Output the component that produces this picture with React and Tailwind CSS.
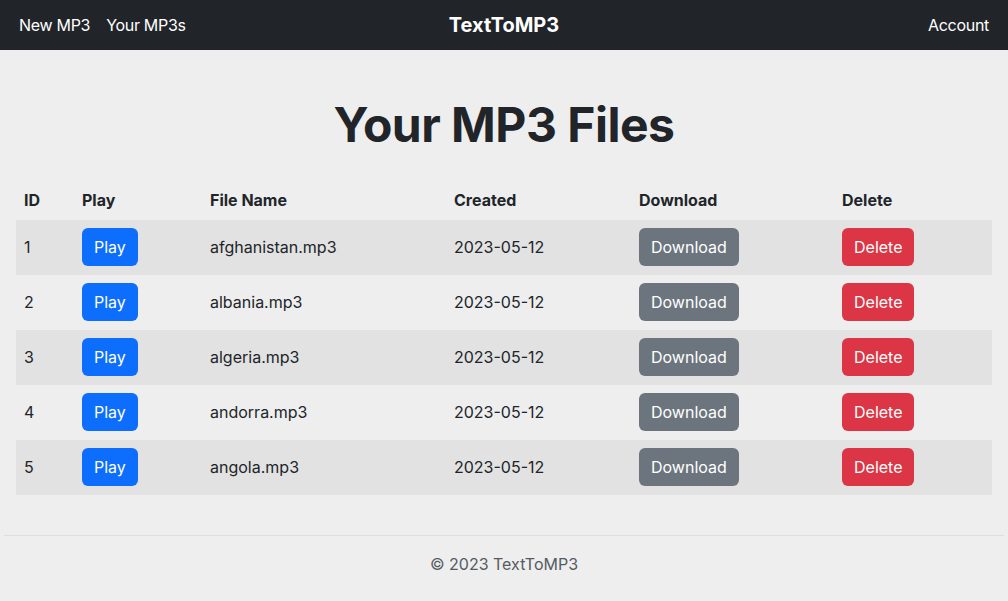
import React from 'react';

const files = [
    { id: 1, name: 'afghanistan.mp3', created: '2023-05-12' },
    { id: 2, name: 'albania.mp3', created: '2023-05-12' },
    { id: 3, name: 'algeria.mp3', created: '2023-05-12' },
    { id: 4, name: 'andorra.mp3', created: '2023-05-12' },
    { id: 5, name: 'angola.mp3', created: '2023-05-12' },
];

const App = () => {
    return (
        <div className="min-h-[601px] bg-[#eeeeee] text-[#212529] font-['Inter','Noto_Sans',sans-serif] text-[16px]">
            <nav className="h-[50px] bg-[#212529] text-white flex items-center justify-between px-[19px] tracking-[-0.3px]">
                <div className="flex gap-[16px] w-[300px]">
                    <span>New MP3</span>
                    <span>Your MP3s</span>
                </div>
                <span className="text-[20px] font-bold tracking-normal">TextToMP3</span>
                <div className="w-[300px] text-right">Account</div>
            </nav>

            <h1 className="text-center text-[48px] font-bold tracking-[-0.5px] pt-[46px] pb-[26px] leading-[1.2]">Your MP3 Files</h1>

            <div className="px-4">
                <table className="w-full border-collapse text-left">
                    <thead>
                        <tr className="h-[40px]">
                            <th className="w-[58px] px-2 font-bold">ID</th>
                            <th className="w-[128px] px-2 font-bold">Play</th>
                            <th className="w-[244px] px-2 font-bold">File Name</th>
                            <th className="w-[185px] px-2 font-bold">Created</th>
                            <th className="w-[203px] px-2 font-bold">Download</th>
                            <th className="px-2 font-bold">Delete</th>
                        </tr>
                    </thead>
                    <tbody>
                        {files.map((f, i) => (
                            <tr key={f.id} className={i % 2 === 0 ? 'h-[55px] bg-[#e2e2e2]' : 'h-[55px]'}>
                                <td className="px-2">{f.id}</td>
                                <td className="px-2">
                                    <button className="h-[38px] px-3 rounded-md bg-[#0d6efd] text-white">Play</button>
                                </td>
                                <td className="px-2">{f.name}</td>
                                <td className="px-2">{f.created}</td>
                                <td className="px-2">
                                    <button className="h-[38px] px-3 rounded-md bg-[#6c757d] text-white">Download</button>
                                </td>
                                <td className="px-2">
                                    <button className="h-[38px] px-3 rounded-md bg-[#dc3545] text-white">Delete</button>
                                </td>
                            </tr>
                        ))}
                    </tbody>
                </table>
            </div>

            <footer className="mt-[40px] mx-1 border-t border-[#dedede] pt-[16px] pb-[28px] text-center text-[#555b61]">
                © 2023 TextToMP3
            </footer>
        </div>
    );
};

export default App;
